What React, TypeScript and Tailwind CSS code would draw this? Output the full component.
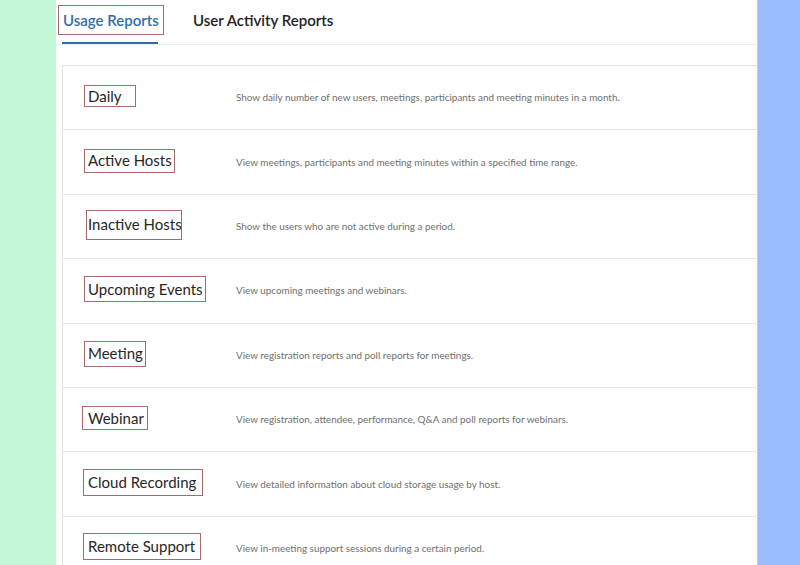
import React from "react";

const rows = [
  {
    label: "Daily",
    box: "ml-[21px] w-[52px] h-[22px] pl-[3px]",
    desc: "Show daily number of new users, meetings, participants and meeting minutes in a month.",
  },
  {
    label: "Active Hosts",
    box: "ml-[21px] w-[91px] h-[24px] pl-[3px]",
    desc: "View meetings, participants and meeting minutes within a specified time range.",
  },
  {
    label: "Inactive Hosts",
    box: "ml-[23px] w-[96px] h-[30px] pl-[1px]",
    desc: "Show the users who are not active during a period.",
  },
  {
    label: "Upcoming Events",
    box: "ml-[21px] w-[122px] h-[26px] pl-[3px]",
    desc: "View upcoming meetings and webinars.",
  },
  {
    label: "Meeting",
    box: "ml-[21px] w-[62px] h-[26px] pl-[3px]",
    desc: "View registration reports and poll reports for meetings.",
  },
  {
    label: "Webinar",
    box: "ml-[19px] w-[66px] h-[24px] pl-[5px]",
    desc: "View registration, attendee, performance, Q&A and poll reports for webinars.",
  },
  {
    label: "Cloud Recording",
    box: "ml-[20px] w-[120px] h-[27px] pl-[4px]",
    desc: "View detailed information about cloud storage usage by host.",
  },
  {
    label: "Remote Support",
    box: "ml-[20px] w-[118px] h-[27px] pl-[4px]",
    desc: "View in-meeting support sessions during a certain period.",
  },
];

export default function App() {
  return (
    <div
      className="flex w-[800px] h-[565px] overflow-hidden"
      style={{ fontFamily: "Lato, 'Open Sans', sans-serif" }}
    >
      <div className="w-[56px] shrink-0 bg-[#c3f8d8]" />
      <div className="flex-1 min-w-0 bg-white overflow-hidden flex flex-col">
        <div className="h-[45px] shrink-0 border-b border-[#eeeeee] flex items-start">
          <div className="ml-[2px] flex flex-col">
            <div className="mt-[5px] h-[30px] w-[106px] border border-[#a86a6a] flex items-center pl-[4px]">
              <span className="text-[15px] font-semibold text-[#2f6ea8] leading-none whitespace-nowrap">
                Usage Reports
              </span>
            </div>
            <div className="ml-[4px] mt-[7px] w-[96px] h-[2px] bg-[#2f6ea8]" />
          </div>
          <div className="ml-[29px] mt-[5px] h-[30px] flex items-center">
            <span className="text-[15px] font-semibold text-[#222222] leading-none whitespace-nowrap">
              User Activity Reports
            </span>
          </div>
        </div>
        <div className="mt-[20px] ml-[6px] border-l border-t border-[#e2e2e2] flex flex-col">
          {rows.map((r) => (
            <div
              key={r.label}
              className="h-[64.4px] shrink-0 border-b border-[#e6e6e6] flex items-center"
            >
              <div className="w-[173px] shrink-0 flex items-center mb-[3px]">
                <span
                  className={
                    "border border-[#a86a6a] flex items-center text-[15px] text-[#262626] leading-none whitespace-nowrap box-border " +
                    r.box
                  }
                >
                  {r.label}
                </span>
              </div>
              <span className="text-[9.9px] text-[#6e6e6e] whitespace-nowrap">
                {r.desc}
              </span>
            </div>
          ))}
        </div>
      </div>
      <div className="w-[43px] shrink-0 bg-[#98bcfc] border-l border-[#b9d0fb]" />
    </div>
  );
}
